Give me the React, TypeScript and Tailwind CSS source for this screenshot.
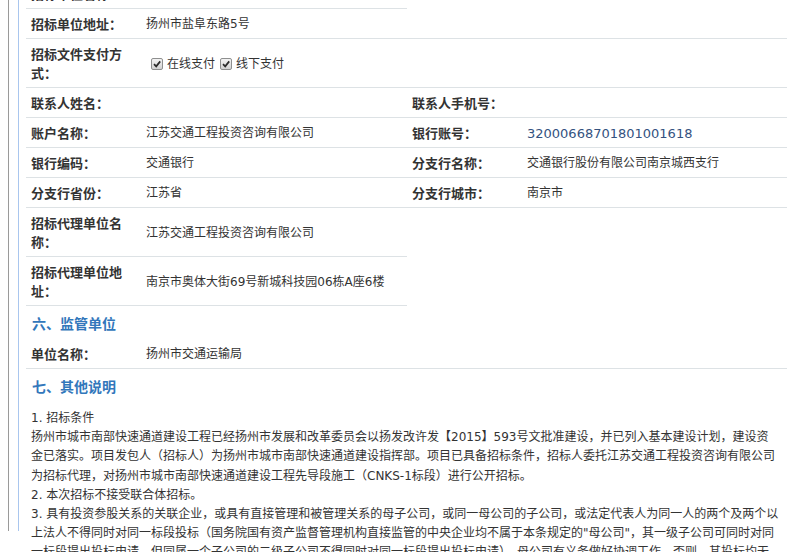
import React from "react";

const LBL =
  "w-[115px] pl-[5px] pr-[10px] pt-[6px] pb-[4px] text-[13px] font-bold text-[#333] leading-[19px] align-middle text-left";
const VAL = "pl-[5px] pr-[5px] pt-[6px] pb-[4px] text-[12px] text-[#333] leading-[19px] align-middle text-left";
const BB = " border-b border-[#dde2e5]";

function Check() {
  return (
    <span className="inline-block w-[12px] h-[12px] ml-[5px] mr-[4px] align-[-2px] border border-[#8e8f8f] rounded-[2px] bg-gradient-to-b from-[#f4f4f4] to-[#d2d2d2] relative">
      <svg viewBox="0 0 10 10" className="absolute left-[0px] top-[0px] w-[10px] h-[10px]">
        <path d="M2 5.2 L4.2 7.4 L8.2 2.4" fill="none" stroke="#2b2b2b" strokeWidth="1.7" />
      </svg>
    </span>
  );
}

function Heading({ children }: { children: React.ReactNode }) {
  return (
    <div className="pl-[6px] pt-[8px] pb-[5px] text-[14px] leading-[20px] font-bold text-[#3277bb]">
      {children}
    </div>
  );
}

function Cols() {
  return (
    <colgroup>
      <col className="w-[115px]" />
      <col className="w-[266px]" />
      <col className="w-[115px]" />
      <col className="w-[265px]" />
    </colgroup>
  );
}

export default function App() {
  return (
    <div className="w-[790px] h-[552px] overflow-hidden bg-white font-['DejaVu_Sans','Noto_Sans_CJK_SC',sans-serif]">
      <div className="pl-[8px] h-full">
        <div className="border-l border-[#9a9a9a] pl-[9px] h-full">
          <div className="border-l border-[#a9c6ee] pl-[7px] h-full">
            <div className="w-[761px] -mt-[21px]">
              <table className="table-fixed border-separate border-spacing-0 w-[761px]">
                <Cols />
                <tbody>
                  <tr>
                    <td className={LBL + BB}>招标单位名称：</td>
                    <td className={VAL + BB + " whitespace-nowrap"}>扬州市城市南部快速通道建设指挥部</td>
                    <td className={LBL}></td>
                    <td className={VAL}></td>
                  </tr>
                  <tr>
                    <td className={LBL + BB}>招标单位地址：</td>
                    <td className={VAL + BB}>扬州市盐阜东路5号</td>
                    <td className={LBL + BB}></td>
                    <td className={VAL + BB}></td>
                  </tr>
                  <tr>
                    <td className={LBL + BB}>招标文件支付方式：</td>
                    <td className={VAL + BB + " pl-[0px]"}>
                      <Check />
                      在线支付
                      <Check />
                      线下支付
                    </td>
                    <td className={LBL + BB}></td>
                    <td className={VAL + BB}></td>
                  </tr>
                  <tr>
                    <td className={LBL + BB}>联系人姓名：</td>
                    <td className={VAL + BB}></td>
                    <td className={LBL + BB}>联系人手机号：</td>
                    <td className={VAL + BB}></td>
                  </tr>
                  <tr>
                    <td className={LBL + BB}>账户名称：</td>
                    <td className={VAL + BB}>江苏交通工程投资咨询有限公司</td>
                    <td className={LBL + BB}>银行账号：</td>
                    <td className={VAL + BB + " text-[13px] text-[#34527f]"}>32000668701801001618</td>
                  </tr>
                  <tr>
                    <td className={LBL + BB}>银行编码：</td>
                    <td className={VAL + BB}>交通银行</td>
                    <td className={LBL + BB}>分支行名称：</td>
                    <td className={VAL + BB}>交通银行股份有限公司南京城西支行</td>
                  </tr>
                  <tr>
                    <td className={LBL + BB}>分支行省份：</td>
                    <td className={VAL + BB}>江苏省</td>
                    <td className={LBL + BB}>分支行城市：</td>
                    <td className={VAL + BB}>南京市</td>
                  </tr>
                  <tr>
                    <td className={LBL + BB}>招标代理单位名称：</td>
                    <td className={VAL + BB}>江苏交通工程投资咨询有限公司</td>
                    <td className={LBL}></td>
                    <td className={VAL}></td>
                  </tr>
                  <tr>
                    <td className={LBL + BB}>招标代理单位地址：</td>
                    <td className={VAL + BB + " whitespace-nowrap"}>南京市奥体大街69号新城科技园06栋A座6楼</td>
                    <td className={LBL}></td>
                    <td className={VAL}></td>
                  </tr>
                </tbody>
              </table>

              <Heading>六、监管单位</Heading>

              <table className="table-fixed border-separate border-spacing-0 w-[761px]">
                <Cols />
                <tbody>
                  <tr>
                    <td className={LBL + BB}>单位名称：</td>
                    <td className={VAL + BB}>扬州市交通运输局</td>
                    <td className={LBL + BB}></td>
                    <td className={VAL + BB}></td>
                  </tr>
                </tbody>
              </table>

              <Heading>七、其他说明</Heading>

              <div className="mt-[7px] pl-[5px] text-[12px] leading-[19.2px] text-[#333] whitespace-nowrap">
                1. 招标条件
                <br />
                扬州市城市南部快速通道建设工程已经扬州市发展和改革委员会以扬发改许发【2015】593号文批准建设，并已列入基本建设计划，建设资
                <br />
                金已落实。项目发包人（招标人）为扬州市城市南部快速通道建设指挥部。项目已具备招标条件，招标人委托江苏交通工程投资咨询有限公司
                <br />
                为招标代理，对扬州市城市南部快速通道建设工程先导段施工（CNKS-1标段）进行公开招标。
                <br />
                2. 本次招标不接受联合体招标。
                <br />
                3. 具有投资参股关系的关联企业，或具有直接管理和被管理关系的母子公司，或同一母公司的子公司，或法定代表人为同一人的两个及两个以
                <br />
                上法人不得同时对同一标段投标（国务院国有资产监督管理机构直接监管的中央企业均不属于本条规定的"母公司"，其一级子公司可同时对同
                <br />
                一标段提出投标申请，但同属一个子公司的二级子公司不得同时对同一标段提出投标申请）。母公司有义务做好协调工作。否则，其投标均无
              </div>
            </div>
          </div>
        </div>
      </div>
    </div>
  );
}
